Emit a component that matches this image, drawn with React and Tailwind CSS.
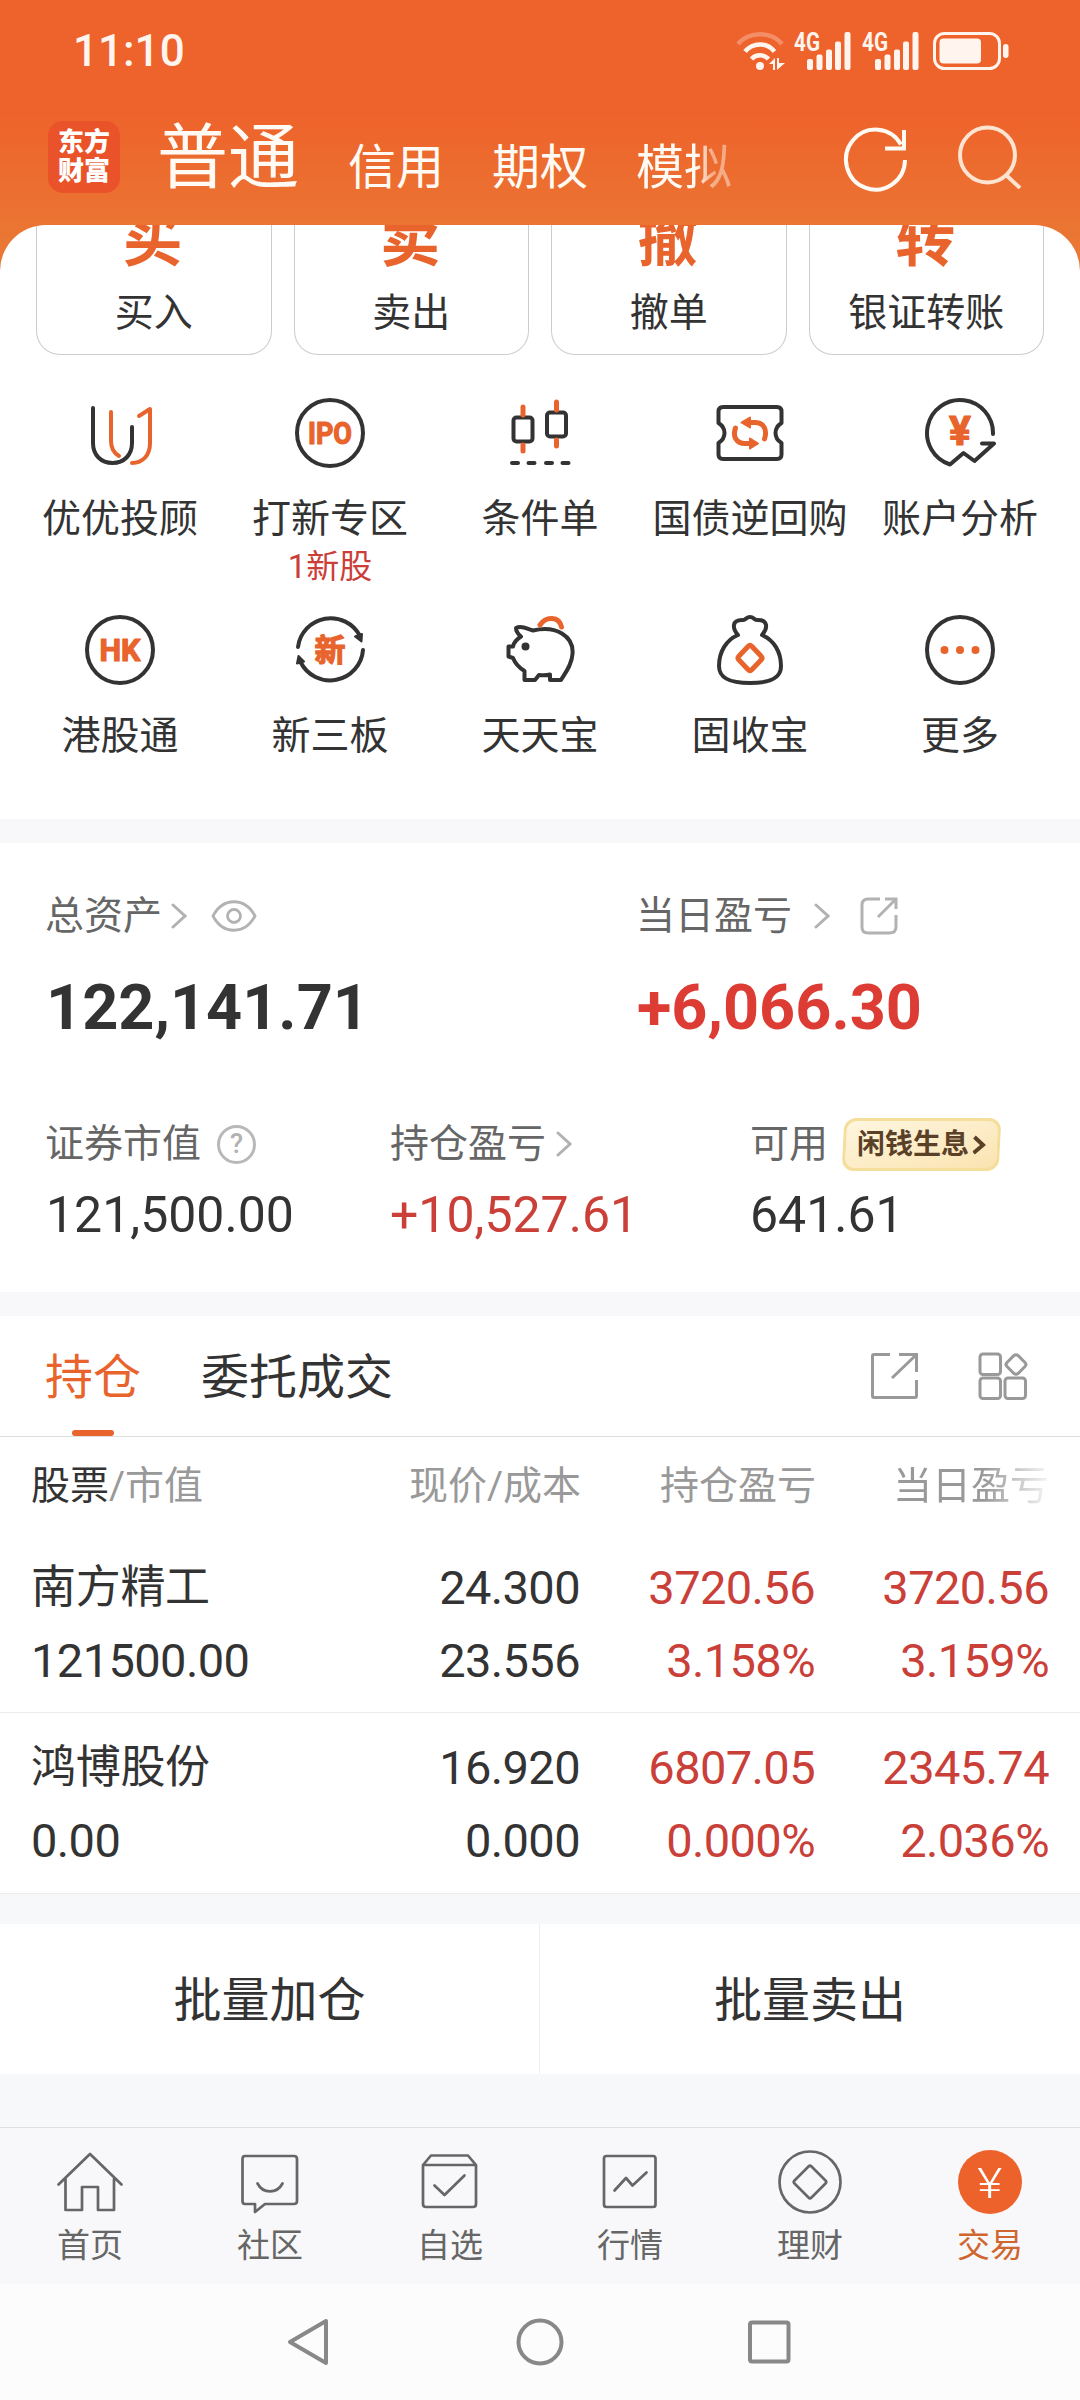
import React, { useState } from "react";

const ORANGE = "#e8642c";
const DARK = "#333333";

const accountTabs = ["信用", "期权", "模拟"];

const tradeActions = [
  { mark: "买", label: "买入" },
  { mark: "卖", label: "卖出" },
  { mark: "撤", label: "撤单" },
  { mark: "转", label: "银证转账" },
];

const holdings = [
  {
    name: "南方精工",
    value: "121500.00",
    price: "24.300",
    cost: "23.556",
    profit: "3720.56",
    profitRate: "3.158%",
    today: "3720.56",
    todayRate: "3.159%",
  },
  {
    name: "鸿博股份",
    value: "0.00",
    price: "16.920",
    cost: "0.000",
    profit: "6807.05",
    profitRate: "0.000%",
    today: "2345.74",
    todayRate: "2.036%",
  },
];

const Icon = ({ children, width = 4, color = DARK }) => (
  <svg
    className="size-[72px] shrink-0"
    viewBox="0 0 72 72"
    fill="none"
    stroke={color}
    strokeWidth={width}
    strokeLinecap="round"
    strokeLinejoin="round"
  >
    {children}
  </svg>
);

const IconText = ({ children, y, size, length }) => (
  <text
    x="36"
    y={y}
    fontSize={size}
    textLength={length}
    lengthAdjust="spacingAndGlyphs"
    textAnchor="middle"
    fontWeight="700"
    fill={ORANGE}
    stroke={ORANGE}
    strokeWidth="1.2"
  >
    {children}
  </text>
);

const AdvisorIcon = () => (
  <Icon>
    <path d="M9 11V46C9 58 17 66 28.500 66S48 58 48 46V30" />
    <path d="M27 15V44C27 52 30 56 35 59M55 19L66 12V46C66 58 59 66 48 66" stroke={ORANGE} />
  </Icon>
);

const IpoIcon = () => (
  <Icon>
    <circle cx="36" cy="36" r="33" />
    <IconText y="47" size="31" length="44">IPO</IconText>
  </Icon>
);

const CandleIcon = () => (
  <Icon>
    <rect x="9.500" y="20.500" width="19" height="24" rx="3" />
    <rect x="43" y="15.500" width="19" height="24" rx="3" />
    <path d="M19 10v8M19 48v6M52.500 5v8M52.500 43v6" stroke={ORANGE} strokeWidth="5" />
    <path d="M8 66h6M24.500 66h6M42 66h6M58.500 66h6" />
  </Icon>
);

const RepoIcon = () => (
  <Icon>
    <path d="M9 10H63Q67.500 10 67.500 14.500V26C59.500 31 59.500 41 67.500 46V57.500Q67.500 62 63 62H9Q4.500 62 4.500 57.500V46C12.500 41 12.500 31 4.500 26V14.500Q4.500 10 9 10Z" />
    <path d="M21.500 31C18.500 39 22 46.500 31 46.500H38M50.500 42C53.500 33 50 25.500 41 25.500H34" stroke={ORANGE} strokeWidth="5" />
    <path d="M36 41.500L44 46.500L36 51.500ZM36 20.500L27.500 25.500L36 30.500Z" fill={ORANGE} stroke={ORANGE} strokeWidth="2" />
  </Icon>
);

const AnalysisIcon = () => (
  <Icon>
    <path d="M69 37A33 33 0 1 0 26 67.500L39.500 56L50.500 64L70 46.500H58" />
    <IconText y="48" size="41">¥</IconText>
  </Icon>
);

const HkIcon = () => (
  <Icon>
    <circle cx="36" cy="36" r="33" />
    <IconText y="47" size="31" length="41">HK</IconText>
  </Icon>
);

const NewBoardIcon = () => (
  <Icon>
    <path d="M4 33A33 33 0 0 1 66 22M69 36A33 33 0 0 1 6.500 48" />
    <path d="M61 22.500L68 20L67.500 27.500ZM3 49.500L4.500 42L10 47.500Z" fill={DARK} strokeWidth="2" />
    <IconText y="47" size="31">新</IconText>
  </Icon>
);

const PigIcon = () => (
  <Icon>
    <path d="M12 14C18 11 23 15 29 16.500C52 11 70 22 68.500 40C68 50 62 58 57 66H46V60.500C42 61.500 39 61.500 35 61L31 66H20.500V57C14 53 11 49 9 44L4.500 42.500V32.500H9C10 28 13 25 17 22.500C14 20 12 18 12 14Z" />
    <circle cx="21.500" cy="32.500" r="4" fill={DARK} stroke="none" />
    <path d="M36 11C42 2 55 2 57.500 13" stroke={ORANGE} strokeWidth="5" />
  </Icon>
);

const BagIcon = () => (
  <Icon>
    <path d="M24 21C18 14 18 6 28 6C31 7 32 3 36 3S41 7 44 6C54 6 54 14 48 21C60 26 67 38 67 52C67 64 57 69 36 69S5 64 5 52C5 38 12 26 24 21Z" />
    <path d="M34 32.500Q36 30.500 38 32.500L47 42Q49 44 47 46L38 55.500Q36 57.500 34 55.500L25 46Q23 44 25 42Z" stroke={ORANGE} strokeWidth="5" />
  </Icon>
);

const MoreIcon = () => (
  <Icon>
    <circle cx="36" cy="36" r="33" />
    <g fill={ORANGE} stroke="none">
      <circle cx="20.500" cy="36" r="4" />
      <circle cx="36" cy="36" r="4" />
      <circle cx="51.500" cy="36" r="4" />
    </g>
  </Icon>
);

const services = [
  { label: "优优投顾", icon: AdvisorIcon },
  { label: "打新专区", icon: IpoIcon, note: "1新股" },
  { label: "条件单", icon: CandleIcon },
  { label: "国债逆回购", icon: RepoIcon },
  { label: "账户分析", icon: AnalysisIcon },
  { label: "港股通", icon: HkIcon },
  { label: "新三板", icon: NewBoardIcon },
  { label: "天天宝", icon: PigIcon },
  { label: "固收宝", icon: BagIcon },
  { label: "更多", icon: MoreIcon },
];

const NAV_GRAY = "#666666";

const navItems = [
  {
    label: "首页",
    icon: (
      <Icon width={2.7} color={NAV_GRAY}>
        <path d="M4.500 38.500L36 8L67.500 38.500M11.500 33V64H28V41H44V64H60V33" />
      </Icon>
    ),
  },
  {
    label: "社区",
    icon: (
      <Icon width={2.7} color={NAV_GRAY}>
        <path d="M11 10H60Q63 10 63 13V55Q63 58 60 58H31L21 66V58H11Q8.500 58 8.500 55V13Q8.500 10 11 10Z" />
        <path d="M23.500 37.500C29 48 43 48 48.500 37.500" />
      </Icon>
    ),
  },
  {
    label: "自选",
    icon: (
      <Icon width={2.7} color={NAV_GRAY}>
        <path d="M9 19L17 9.500H54L62 19V58Q62 61 59 61H12Q9 61 9 58ZM9 19H62" />
        <path d="M20.500 39.500L30.500 49L50.500 29.500" />
      </Icon>
    ),
  },
  {
    label: "行情",
    icon: (
      <Icon width={2.7} color={NAV_GRAY}>
        <rect x="10" y="10" width="51.500" height="51" rx="2.500" />
        <path d="M20.500 44.500L32 32L38.500 39.500L52.500 26.500" />
      </Icon>
    ),
  },
  {
    label: "理财",
    icon: (
      <Icon width={2.7} color={NAV_GRAY}>
        <circle cx="36" cy="36" r="30.500" />
        <path d="M34.500 20.500Q36 19 37.500 20.500L51.500 34.500Q53 36 51.500 37.500L37.500 51.500Q36 53 34.500 51.500L20.500 37.500Q19 36 20.500 34.500Z" />
      </Icon>
    ),
  },
  {
    label: "交易",
    icon: (
      <span className="my-1 flex size-16 items-center justify-center rounded-full bg-[#ed622b] pt-1 text-[42px] leading-none font-light text-white">
        <span className="scale-x-115">¥</span>
      </span>
    ),
  },
];

const Chevron = ({ className }) => (
  <svg className={`h-[26px] w-4 shrink-0 ${className}`} viewBox="0 0 16 26" fill="none" stroke="#b2b2b2" strokeWidth="3" strokeLinecap="round">
    <path d="M2 2L14 13L2 24" />
  </svg>
);

const Signal = () => (
  <svg className="h-[38px] w-[57px] overflow-visible" viewBox="0 0 57 38" fill="#fff5ee">
    <text x="0" y="19" fontSize="25" fontWeight="700" textLength="26" lengthAdjust="spacingAndGlyphs">4G</text>
    <rect x="13" y="27" width="6" height="11" rx="2" />
    <rect x="22.500" y="22.500" width="6" height="15.500" rx="2" />
    <rect x="32" y="17.500" width="6" height="20.500" rx="2" />
    <rect x="41" y="9.500" width="6" height="28.500" rx="2" />
    <rect x="50.500" y="0" width="6" height="38" rx="2" />
  </svg>
);

const StatusBar = () => (
  <div className="flex h-[102px] items-center justify-between pr-[70px] pl-[73px]">
    <span className="text-[44px] leading-none font-medium text-[#fff5ee]">11:10</span>
    <div className="flex items-center">
      <svg className="h-[38px] w-[49px]" viewBox="0 0 49 38" fill="none" stroke="#fff5ee" strokeWidth="4.500">
        <path d="M2 12C13 -1 35 -1 46 12" opacity="0.3" />
        <path d="M9 19.500C17 10 31 10 38.500 19.500" />
        <path d="M15.500 27C20 22 28 22 32.500 27" />
        <circle cx="24" cy="34" r="4" fill="#fff5ee" stroke="none" />
        <path d="M33 32L39 26V38H37V32ZM41 26V38L49 31H43V26Z" fill="#fff5ee" stroke="none" />
      </svg>
      <div className="ml-[9px] flex gap-[11px]">
        <Signal />
        <Signal />
      </div>
      <svg className="ml-[14px] h-[40px] w-[77px]" viewBox="0 0 77 40" fill="#fff5ee">
        <rect x="1.500" y="2.500" width="65" height="35" rx="10" fill="none" stroke="#fff5ee" strokeWidth="3" />
        <rect x="6.500" y="7.500" width="41.500" height="25" rx="4" />
        <rect x="70" y="13" width="5.500" height="14" rx="2.700" />
      </svg>
    </div>
  </div>
);

const Header = () => (
  <div className="flex h-[123px] pl-12">
    <div className="mt-[19px] flex size-[72px] flex-col items-center justify-center rounded-[15px] bg-[#ea5229] text-[26px] leading-[29px] font-black text-white">
      <span>东方</span>
      <span>财富</span>
    </div>
    <div className="ml-[37px] flex h-[90px] items-baseline pt-[18px] text-[#fffaf3]">
      <span className="text-[71px] leading-[76px]">普通</span>
      <div className="ml-[49px] flex translate-y-[2px] gap-12 text-[48px]">
        {accountTabs.map((tab) => (
          <span
            key={tab}
            className="last:[mask-image:linear-gradient(90deg,#000_62%,rgba(0,0,0,0.45)_80%)]"
          >
            {tab}
          </span>
        ))}
      </div>
    </div>
    <svg className="mt-6 ml-[112px] h-16 w-[64px] overflow-visible" viewBox="0 0 64 64" fill="none" stroke="#fffaf3" strokeWidth="4">
      <path d="M61 34A29.500 30 0 1 1 57 18.500" />
      <path d="M60 4V22.500H41" />
    </svg>
    <svg className="mt-[21px] ml-[50px] h-[66px] w-[64px]" viewBox="0 0 64 66" fill="none" stroke="#ffe3d1" strokeWidth="4">
      <circle cx="29.500" cy="32" r="27.500" />
      <path d="M48 52L62 65" />
    </svg>
  </div>
);

const AssetSummary = () => (
  <section className="h-[449px] bg-white pt-[53px] pl-[45px] text-[#333]">
    <div className="grid grid-cols-[591px_1fr]">
      <div>
        <div className="flex h-10 items-center text-[39px] leading-none text-[#666]">
          总资产
          <Chevron className="ml-[9px]" />
          <svg className="ml-6 h-8 w-[46px]" viewBox="0 0 46 32" fill="none" stroke="#b2b2b2" strokeWidth="2.800">
            <path d="M2 16C12 -3 34 -3 44 16C34 35 12 35 2 16Z" />
            <circle cx="23" cy="16" r="6.500" />
          </svg>
        </div>
        <div className="mt-10 ml-px text-[63px] leading-[64px] font-bold">122,141.71</div>
      </div>
      <div>
        <div className="flex h-10 items-center text-[39px] leading-none text-[#666]">
          当日盈亏
          <Chevron className="ml-[22px]" />
          <svg className="ml-[30px] size-[38px]" viewBox="0 0 38 38" fill="none" stroke="#b2b2b2" strokeWidth="3">
            <path d="M20 2H8Q2 2 2 8V30Q2 36 8 36H29Q36 36 36 30V18" />
            <path d="M18 20L35 3M25 2H36V12" />
          </svg>
        </div>
        <div className="mt-10 ml-px text-[63px] leading-[64px] font-bold text-[#dc3c33]">+6,066.30</div>
      </div>
    </div>
    <div className="mt-[78px] grid grid-cols-[345px_360px_1fr]">
      <div>
        <div className="flex h-[52px] items-center text-[39px] leading-none text-[#666]">
          证券市值
          <span className="ml-4 flex size-[39px] items-center justify-center rounded-full border-3 border-[#b8b8b8] text-[27px] leading-none font-medium text-[#b2b2b2]">
            ?
          </span>
        </div>
        <div className="mt-5 ml-px text-[50px] leading-none">121,500.00</div>
      </div>
      <div>
        <div className="flex h-[52px] items-center text-[39px] leading-none text-[#666]">
          持仓盈亏
          <Chevron className="ml-[10px]" />
        </div>
        <div className="mt-5 text-[50px] leading-none text-[#ca4039]">+10,527.61</div>
      </div>
      <div>
        <div className="flex h-[52px] items-center text-[39px] leading-none text-[#666]">
          可用
          <span className="ml-[15px] flex h-[53px] w-[157px] -skew-x-3 items-center justify-center rounded-[12px] border-3 border-[#f5de9a] bg-linear-to-br from-[#fef6e0] to-[#fbe3b0] text-[28px] font-bold text-[#5b4028]">
            <span className="skew-x-3">闲钱生息</span>
            <svg className="ml-[3px] h-5 w-[13px]" viewBox="0 0 13 20" fill="none" stroke="#5b4028" strokeWidth="4">
              <path d="M1 2L10 10L1 18" />
            </svg>
          </span>
        </div>
        <div className="mt-5 text-[50px] leading-none">641.61</div>
      </div>
    </div>
  </section>
);

const HoldingRow = ({ item }) => (
  <div className="grid h-[180px] grid-cols-[300px_249px_235px_234px] content-start gap-y-[26px] pt-[31px] pl-[31px] text-right text-[47px] leading-[47px] tracking-[-0.6px]">
    <span className="text-left text-[45px] tracking-[-0.3px]">{item.name}</span>
    <span>{item.price}</span>
    <span className="text-[#ca4039]">{item.profit}</span>
    <span className="text-[#ca4039]">{item.today}</span>
    <span className="text-left">{item.value}</span>
    <span>{item.cost}</span>
    <span className="text-[#ca4039]">{item.profitRate}</span>
    <span className="text-[#ca4039]">{item.todayRate}</span>
  </div>
);

const Holdings = () => {
  const [tab, setTab] = useState("持仓");

  return (
    <section className="bg-white text-[#333]">
      <div className="flex h-[121px] items-stretch border-b border-[#dedede] pr-[52px] pl-[45px] text-[48px] leading-none">
        {["持仓", "委托成交"].map((name) => (
          <button
            key={name}
            onClick={() => setTab(name)}
            className={`mr-[60px] flex flex-col items-center pt-[38px] ${tab === name ? "text-[#e8642c]" : ""}`}
          >
            {name}
            {tab === name && <span className="mt-auto h-[6px] w-[42px] rounded-full bg-[#e8642c]" />}
          </button>
        ))}
        <div className="ml-auto flex items-center gap-[60px]">
          <svg className="size-12" viewBox="0 0 48 48" fill="none" stroke="#999" strokeWidth="3">
            <path d="M20 2.500H4Q2.500 2.500 2.500 4V44Q2.500 45.500 4 45.500H45Q46.500 45.500 46.500 44V28" />
            <path d="M22 26L45 4M29 2.500H46.500V20" />
          </svg>
          <svg className="size-[50px]" viewBox="0 0 50 50" fill="none" stroke="#999" strokeWidth="3">
            <rect x="2" y="3" width="20.500" height="20.500" rx="3" />
            <rect x="2" y="27" width="20.500" height="20.500" rx="3" />
            <rect x="27" y="27" width="20.500" height="20.500" rx="3" />
            <path d="M36 4.500Q38 3 40 4.500L47 11.500Q49 13.500 47 15.500L40 22.500Q38 24 36 22.500L29 15.500Q27 13.500 29 11.500Z" />
          </svg>
        </div>
      </div>
      <div className="grid h-24 grid-cols-[300px_250px_235px_233px] items-center pt-[3px] pl-[31px] text-right text-[39px] leading-none text-[#999]">
        <span className="text-left">
          <span className="text-[#333]">股票</span>/市值
        </span>
        <span>现价/成本</span>
        <span>持仓盈亏</span>
        <span className="[mask-image:linear-gradient(90deg,#000_72%,rgba(0,0,0,0.1)_100%)]">当日盈亏</span>
      </div>
      <div className="divide-y divide-[#ececec] border-b border-[#ececec]">
        {holdings.map((item) => (
          <HoldingRow key={item.name} item={item} />
        ))}
      </div>
    </section>
  );
};

const App = () => {
  return (
    <div className="flex h-[2400px] w-[1080px] flex-col overflow-hidden bg-[#f7f8fa] font-['Roboto','Noto_Sans_CJK_SC',sans-serif]">
      <div className="bg-[linear-gradient(#ee622b_107px,#ea7834_250px)]">
        <StatusBar />
        <Header />
        <main className="h-[594px] overflow-hidden rounded-t-[46px] bg-white text-[#333]">
          <div className="grid grid-cols-4 gap-[22px] px-9">
            {tradeActions.map(({ mark, label }) => (
              <div
                key={label}
                className="flex h-[130px] flex-col items-center overflow-hidden rounded-b-[24px] border border-t-0 border-[#ccc]"
              >
                <span className="-mt-[14px] mr-[2px] text-[60px] leading-[60px] font-bold text-[#e8642c]">{mark}</span>
                <span className="mt-[23px] text-[39px] leading-[39px]">{label}</span>
              </div>
            ))}
          </div>
          <div className="mt-[42px] grid grid-cols-5 px-[15px]">
            {services.map(({ label, icon: ServiceIcon, note }) => (
              <div key={label} className="flex h-[217px] flex-col items-center whitespace-nowrap">
                <ServiceIcon />
                <span className="mt-[31px] text-[39px] leading-[39px]">{label}</span>
                {note && <span className="mt-[11px] text-[33px] leading-[33px] text-[#ca4039]">{note}</span>}
              </div>
            ))}
          </div>
        </main>
      </div>
      <div className="h-6 bg-[#f8f8fa]" />
      <AssetSummary />
      <div className="h-6 bg-[#f8f8fa]" />
      <Holdings />
      <div className="mt-[30px] grid h-[150px] grid-cols-2 divide-x divide-[#eee] bg-white text-[48px] leading-none text-[#333]">
        <button className="pt-1">批量加仓</button>
        <button className="pt-1">批量卖出</button>
      </div>
      <nav className="mt-auto grid h-[157px] grid-cols-6 border-t border-[#dfdfdf] bg-[#f8f8fa] pt-[18px] text-[33px] leading-[33px] text-[#666]">
        {navItems.map(({ label, icon }) => (
          <div key={label} className="flex flex-col items-center last:text-[#d0662f]">
            {icon}
            <span className="mt-[11px]">{label}</span>
          </div>
        ))}
      </nav>
      <div className="flex h-[116px] items-center justify-center gap-[181px] bg-[#fcfcfc]">
        <svg className="size-12" viewBox="0 0 48 48" fill="none" stroke="#888" strokeWidth="4" strokeLinejoin="round">
          <path d="M39 3V45L3 24Z" />
        </svg>
        <svg className="size-12" viewBox="0 0 48 48" fill="none" stroke="#888" strokeWidth="4">
          <circle cx="24" cy="24" r="21.500" />
        </svg>
        <svg className="size-12" viewBox="0 0 48 48" fill="none" stroke="#888" strokeWidth="4">
          <rect x="5" y="4.500" width="38.500" height="39" rx="2" />
        </svg>
      </div>
    </div>
  );
};

export default App;
